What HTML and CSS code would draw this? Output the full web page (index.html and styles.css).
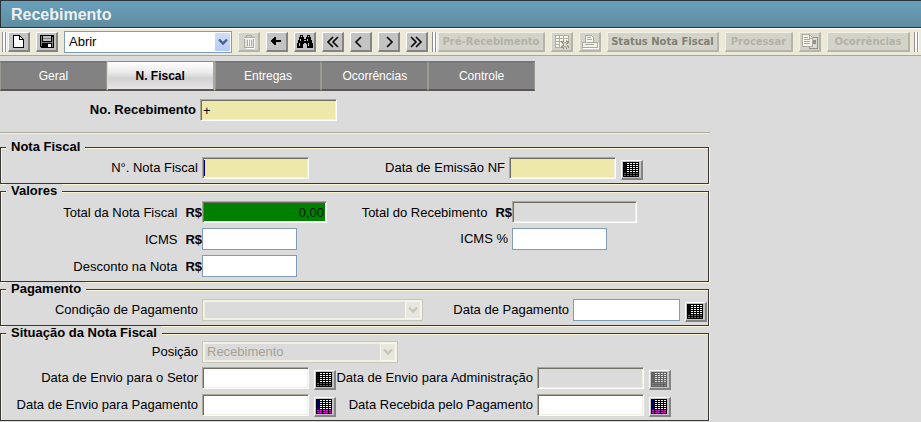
FILE: index.html
```html
<!DOCTYPE html>
<html lang="pt-BR">
<head>
<meta charset="utf-8">
<title>Recebimento</title>
<link rel="stylesheet" href="styles.css">
</head>
<body>
<svg class="defs" aria-hidden="true">
  <symbol id="calendar" viewBox="1 1 19 17">
    <path class="cal-back" d="M2 2h16v15H2z"/>
    <path class="cal-side" d="M3 3.5h3M3 5.5h3M3 7.5h3M3 9.5h3M3 11.5h3"/>
    <path class="cal-day" d="M6 3.5h11M6 5.5h11M6 7.5h11M6 9.5h11M6 11.5h11"/>
    <path class="cal-end" d="M3 13.5h14M3 15.5h14"/>
  </symbol>
  <symbol id="chevron" viewBox="0 0 10 8">
    <path d="M1 1.5l4 4 4-4" fill="none" stroke="currentColor" stroke-width="2.4"/>
  </symbol>
</svg>

<header class="title"><h1>Recebimento</h1></header>

<div class="toolbar" role="toolbar" aria-label="Ações">
  <span class="grip"></span>
  <button class="tool" aria-label="Novo"><svg viewBox="1 1 19 17"><path d="M5.5 3.5h6l4 4v8h-10z" fill="#fff" stroke="#000"/><path d="M11.5 3.5v4h4" fill="none" stroke="#000"/></svg></button>
  <button class="tool" aria-label="Salvar"><svg viewBox="1 1 19 17"><path d="M4 3h14v13H5l-1-1z" fill="#000"/><path d="M5 4h1v10H5zM16 5h1v10h-1z" fill="#808080"/><path d="M7 4h8v5H7z" fill="#c0c0c0"/><path d="M7 6h8v1H7z" fill="#808080"/><path d="M12 12h3v3h-3z" fill="#fff"/><path d="M6 10h10v1H6z" fill="#808080"/></svg></button>
  <div class="select toolbar-select">
    <select aria-label="Ação"><option>Abrir</option></select>
    <span class="arrow"><svg><use href="#chevron"/></svg></span>
  </div>
  <button class="tool" disabled aria-label="Excluir"><svg viewBox="1 1 19 17"><path d="M6 7h10v9H7V7z" fill="#e6e5dc"/><path d="M5.500 5.500h11M8.500 5V3.500h5V5M6.500 7v8.500h9V7M9.500 7.500v6M11.500 7.500v6M13.500 7.500v6" fill="none" stroke="#aaa99c"/><path d="M6 6.500h11M8 16.500h8.500V7M10.500 8v6M12.500 8v6" fill="none" stroke="#fff"/></svg></button>
  <button class="tool" aria-label="Voltar"><svg viewBox="1 1 19 17"><path d="M5 8h1V7h1V6h1V5h2v3h5v2h-5v3H8v-1H7v-1H6v-1H5z"/></svg></button>
  <button class="tool" aria-label="Pesquisar"><svg viewBox="1 1 19 17"><path d="M6 3h3v2h1v2h2V5h1V3h3v2h1v3h1v3h1v5h-6v-4h-1v-1h-2v1H9v4H3v-5h1V8h1V5h1z"/><path d="M7 4h1v1H7zM14 4h1v1h-1zM6 7h1v2H6zM5 11h1v3H5zM13 7h1v2h-1zM14 11h1v3h-1zM10 8h2v1h-2z" fill="#c0c0c0"/></svg></button>
  <button class="tool" aria-label="Primeiro"><svg class="chev" viewBox="1 1 19 17"><path d="M11 5l-5 5 5 5M16 5l-5 5 5 5"/></svg></button>
  <button class="tool" aria-label="Anterior"><svg class="chev" viewBox="1 1 19 17"><path d="M11 5l-5 5 5 5"/></svg></button>
  <button class="tool" aria-label="Próximo"><svg class="chev" viewBox="1 1 19 17"><path d="M9 5l5 5-5 5"/></svg></button>
  <button class="tool" aria-label="Último"><svg class="chev" viewBox="1 1 19 17"><path d="M5 5l5 5-5 5M10 5l5 5-5 5"/></svg></button>
  <span class="grip"></span>
  <button class="tool text w-pre" disabled>Pré-Recebimento</button>
  <button class="tool" disabled aria-label="Cancelar nota"><svg viewBox="1 1 19 17"><path d="M4 3h13v12H4z" fill="#f3f2eb"/><path d="M4.500 15.500v-12h13V9M4 6.500h13M4 9.500h6M4 12.500h5M8.500 4v11M12.500 4v4M4 15.500h6" fill="none" stroke="#b1b0a3"/><path d="M11 9l6 7M17 9l-6 7" stroke="#949387" stroke-width="3"/><path d="M12 10l5 6M16 10l-4 5" stroke="#e6e5dc"/></svg></button>
  <button class="tool" disabled aria-label="Imprimir"><svg viewBox="1 1 19 17"><path d="M6 3h8l1 7h3v5H4v-5h2z" fill="#f3f2eb"/><path d="M6.500 10V3.500h6l2 2V10M3.500 10.500h15v5h-15zM8 5.500h4M8 7.500h5M6 12.500h9" fill="none" stroke="#aaa99c"/><path d="M4 16.500h15V11" fill="none" stroke="#fff"/></svg></button>
  <button class="tool text strong w-status" disabled>Status Nota Fiscal</button>
  <button class="tool text w-proc" disabled>Processar</button>
  <button class="tool" disabled aria-label="Copiar"><svg viewBox="1 1 19 17"><path d="M10.500 5.500h8v11h-8z" fill="#deddd2" stroke="#949387"/><path d="M14 8h3v4h-3z" fill="#949387"/><path d="M3.500 2.500h7l3 3v9h-10z" fill="#f3f2eb" stroke="#aaa99c"/><path d="M5 5.500h4M5 7.500h6M5 9.500h6M5 11.500h6M10.500 3v3h3" fill="none" stroke="#aaa99c"/></svg></button>
  <button class="tool text w-oco" disabled>Ocorrências</button>
  <span class="grip"></span>
</div>

<nav class="tabs">
  <a href="#geral">Geral</a>
  <a href="#nfiscal" class="active" aria-current="page">N. Fiscal</a>
  <a href="#entregas">Entregas</a>
  <a href="#ocorrencias">Ocorrências</a>
  <a href="#controle">Controle</a>
</nav>

<main>
<form>
  <div class="record">
    <label for="numero">No. Recebimento</label>
    <input id="numero" class="field sunken key" value="+">
  </div>

  <fieldset>
    <legend>Nota Fiscal</legend>
    <div class="grid nota">
      <label for="nf">N°. Nota Fiscal</label>
      <input id="nf" class="field sunken key caret">
      <label for="emissao">Data de Emissão NF</label>
      <div class="picker"><input id="emissao" class="field sunken key"><button type="button" class="tool" aria-label="Calendário"><svg><use href="#calendar"/></svg></button></div>
    </div>
  </fieldset>

  <fieldset>
    <legend>Valores</legend>
    <div class="grid valores">
      <label class="money" for="total">Total da Nota Fiscal <b>R$</b></label>
      <input id="total" class="field sunken total" value="0,00" readonly>
      <label class="money" for="totalrec">Total do Recebimento <b>R$</b></label>
      <input id="totalrec" class="field sunken amount" disabled>
      <label class="money" for="icms">ICMS <b>R$</b></label>
      <input id="icms" class="field small">
      <label for="icmsp">ICMS %</label>
      <input id="icmsp" class="field small">
      <label class="money" for="desconto">Desconto na Nota <b>R$</b></label>
      <input id="desconto" class="field small">
    </div>
  </fieldset>

  <fieldset>
    <legend>Pagamento</legend>
    <div class="grid pagamento">
      <label for="condicao">Condição de Pagamento</label>
      <div class="select off condicao"><select id="condicao" disabled></select><span class="arrow"><svg><use href="#chevron"/></svg></span></div>
      <label for="datapag">Data de Pagamento</label>
      <div class="picker"><input id="datapag" class="field"><button type="button" class="tool" aria-label="Calendário"><svg><use href="#calendar"/></svg></button></div>
    </div>
  </fieldset>

  <fieldset>
    <legend>Situação da Nota Fiscal</legend>
    <div class="grid situacao">
      <label for="posicao">Posição</label>
      <div class="select off posicao"><select id="posicao" disabled><option>Recebimento</option></select><span class="arrow"><svg><use href="#chevron"/></svg></span></div>
      <label for="setor">Data de Envio para o Setor</label>
      <div class="picker"><input id="setor" class="field sunken"><button type="button" class="tool" aria-label="Calendário"><svg><use href="#calendar"/></svg></button></div>
      <label for="adm">Data de Envio para Administração</label>
      <div class="picker"><input id="adm" class="field sunken" disabled><button type="button" class="tool faded" aria-label="Calendário" disabled><svg><use href="#calendar"/></svg></button></div>
      <label for="envpag">Data de Envio para Pagamento</label>
      <div class="picker"><input id="envpag" class="field sunken"><button type="button" class="tool" aria-label="Calendário"><svg><use href="#calendar"/></svg></button></div>
      <label for="recpag">Data Recebida pelo Pagamento</label>
      <div class="picker"><input id="recpag" class="field sunken"><button type="button" class="tool" aria-label="Calendário"><svg><use href="#calendar"/></svg></button></div>
    </div>
  </fieldset>
</form>
</main>
</body>
</html>
```
FILE: styles.css
```css
* { box-sizing: border-box; }

body {
  margin: 0;
  background: #dbdbdb;
  color: #000;
  font: 13px/16px "Liberation Sans", Arial, sans-serif;
}

button, input, select { font: inherit; margin: 0; }

.defs { display: none; }

/* Title bar */
.title {
  height: 28px;
  padding: 0 10px;
  border: 1px solid #2b3338;
  border-right: 0;
  background: linear-gradient(#69a1bc, #5e8c9f);
}

.title h1 {
  margin: 0;
  color: #f0f0f0;
  font-size: 16px;
  line-height: 27px;
}

/* Toolbar */
.toolbar {
  display: flex;
  align-items: center;
  gap: 6px;
  height: 28px;
  padding-left: 4px;
  border-top: 1px solid #fff;
  border-bottom: 1px solid #aca899;
  background: #ece9d8;
}

.toolbar > * { flex: none; }

.grip {
  width: 4px;
  height: 20px;
  margin: 0 -4px 0 -2px;
  border: solid #8d8d92;
  border-width: 0 1px;
  background: #fff;
  box-shadow: 1px 0 #fff;
}

.tool {
  flex: none;
  width: 22px;
  height: 20px;
  padding: 0;
  border: solid #848484;
  border-color: #fff #848484 #848484 #fff;
  border-width: 1px 2px 2px 1px;
  border-radius: 0;
  background: #c3c3c3;
}

.tool svg {
  display: block;
  width: 19px;
  height: 17px;
  shape-rendering: crispEdges;
}

.tool .chev {
  fill: none;
  stroke: #000;
  stroke-width: 1.6;
  shape-rendering: auto;
}

.toolbar .tool:disabled {
  border-color: #f1f0e6 #b5b4a8 #b5b4a8 #f1f0e6;
  background: #d4d3c9;
}

.toolbar .text {
  color: #b3b2a6;
  font: bold 10px/17px "DejaVu Sans", Verdana, sans-serif;
  white-space: nowrap;
}

.toolbar .strong { color: #808074; }
.w-pre { width: 107px; }
.w-status { width: 112px; }
.w-proc { width: 68px; }
.w-oco { width: 83px; }

/* Drop-downs */
.select {
  position: relative;
  height: 22px;
}

.select select {
  width: 100%;
  height: 100%;
  padding: 0 20px 0 4px;
  border: 1px solid #7f9db9;
  border-radius: 0;
  background: #fff;
  color: #000;
  appearance: none;
}

.select .arrow {
  position: absolute;
  top: 2px;
  right: 2px;
  bottom: 2px;
  display: grid;
  place-items: center;
  width: 15px;
  border-radius: 1px;
  background: linear-gradient(#d0defc, #b5cbf8);
  color: #4d6185;
  pointer-events: none;
}

.arrow svg { width: 10px; height: 8px; }

.toolbar-select { width: 168px; }

.off select {
  border-color: #c9c7ba;
  background: #dbdbdb;
  box-shadow: inset 0 0 0 2px #f3f1e6;
  color: #a5a191;
  opacity: 1;
}

.off .arrow {
  width: 16px;
  border: 1px solid #f8f7f1;
  background: #e8e7dd;
  color: #c6c5ba;
}

.condicao { width: 221px; }
.posicao { width: 196px; }

/* Tabs */
.tabs {
  display: flex;
  max-width: 535px;
  margin-top: 5px;
}

.tabs a {
  flex: 1;
  height: 30px;
  border: solid #9b9b92;
  border-width: 2px 1px;
  border-top-color: #77777a;
  border-bottom-color: #5b5557;
  background: #828282;
  color: #fff;
  font-size: 12px;
  line-height: 26px;
  text-align: center;
  text-decoration: none;
}

.tabs .active {
  border-color: #8c8c8c #a9a99f #5b5557 #d8d8d8;
  border-width: 1px 2px 2px 1px;
  background: linear-gradient(#fff, #e9e9e9 40%, #d2d2d2 60%, #e6e6e6);
  color: #000;
  font-weight: bold;
  line-height: 28px;
}

/* Form */
main { max-width: 710px; }

.record {
  display: grid;
  grid-template-columns: 196px 137px;
  gap: 4px;
  align-items: center;
  padding: 8px 0 11px;
  border-bottom: 1px solid #aca899;
  box-shadow: 0 1px #f4f1df;
  margin-bottom: 7px;
}

.record label {
  font-weight: bold;
  text-align: right;
}

.field {
  width: 107px;
  height: 22px;
  padding: 0 2px;
  border: 1px solid #7f9db9;
  border-radius: 0;
  background: #fff;
}

.sunken {
  border-color: #aca899 #fff #fff #aca899;
  box-shadow: inset 1px 1px #716f64, inset -1px -1px #f1efe2;
}

.field:disabled { background: #dbdbdb; }
.key { background: #eee8aa; }
.record .key { width: 137px; }

.caret {
  background: linear-gradient(#000080, #000080) 1px 2px / 1px 16px no-repeat #eee8aa;
}

.total {
  width: 125px;
  background: #008000;
  color: #001c00;
  text-align: right;
}

.amount { width: 125px; }
.small { width: 95px; }

fieldset {
  min-width: 0;
  margin: 0 1px 0 0;
  padding: 0;
  border: 1px solid #3b3831;
  box-shadow: 1px 1px #fbf5d6, inset 1px 1px #fbf5d6;
}

legend {
  margin-left: 5px;
  padding: 0 5px;
  background: #dbdbdb;
  font-weight: bold;
  line-height: 14px;
}

.grid {
  display: grid;
  row-gap: 5px;
  padding: 3px 0;
}

.grid label {
  padding: 3px 4px 3px 0;
  line-height: 16px;
  text-align: right;
  white-space: nowrap;
}

.grid .money {
  display: flex;
  justify-content: flex-end;
  gap: 8px;
  padding: 4px 0 2px;
}

.nota { grid-template-columns: 201px auto 1fr 199px; }
.valores { grid-template-columns: 201px auto 1fr 196px; padding-bottom: 4px; }
.pagamento { grid-template-columns: 201px auto 1fr 135px; }
.situacao { grid-template-columns: 201px auto 1fr 171px; row-gap: 4px; padding-top: 1px; }
.posicao { grid-column: 2 / -1; }
.situacao .picker { width: 134px; }

.picker {
  display: flex;
  align-items: flex-start;
  gap: 5px;
}

.picker .tool { margin-top: 3px; }

.cal-back { fill: #000; }
.cal-side, .cal-day, .cal-end { fill: none; stroke-dasharray: 2 1; }
.cal-side { stroke: #000080; }
.cal-day { stroke: #fff; }
.cal-end { stroke: #f0f; }

.faded svg { filter: grayscale(1) opacity(0.5); }
```
